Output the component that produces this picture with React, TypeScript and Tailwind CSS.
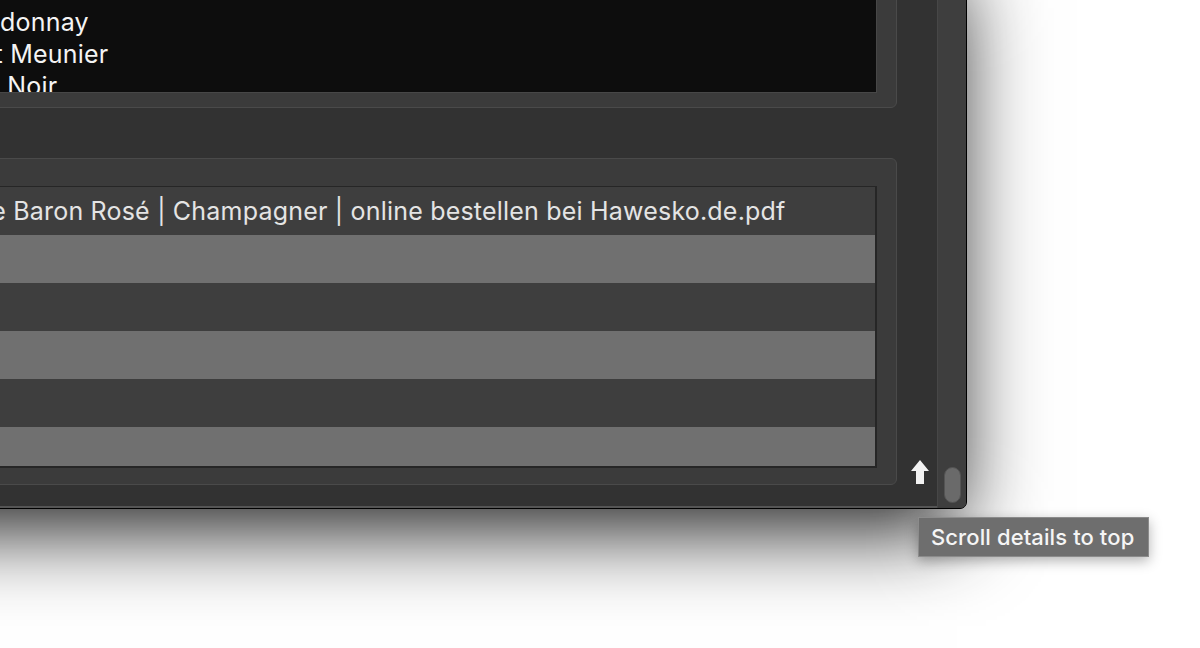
export default function App() {
  return (
    <div className="relative w-[1200px] h-[648px] overflow-hidden bg-white font-['Inter',sans-serif]">
      {/* window, its left and top edges are off the page */}
      <div className="relative ml-[-120px] mt-[-60px] flex w-[1087px] h-[569px] overflow-hidden rounded-br-[7px] border border-black bg-[#323232] shadow-[inset_-1px_-2px_0_#555,0_30px_80px_-10px_rgba(0,0,0,0.9)]">
        <main className="relative flex flex-1 flex-col pl-[9px] pr-[40px] pt-[1px]">
          {/* details text */}
          <section className="flex h-[166px] rounded-[6px] border border-[#4a4a4a] bg-[#3b3b3b] pl-[19px] pr-[19px] pt-[14px] pb-[14px]">
            <div className="flex-1 overflow-hidden border border-[#474747] bg-[#0d0d0d] pt-[48px] text-[25px] leading-[32px] tracking-[0.2px] text-[#f4f4f4]">
              <div className="flex whitespace-nowrap">
                <span className="w-[89px] shrink-0 text-right">Char</span>
                <span>donnay</span>
              </div>
              <div className="flex whitespace-nowrap">
                <span className="w-[92px] shrink-0 text-right">Pinot</span>
                <span>&nbsp;Meunier</span>
              </div>
              <div className="flex whitespace-nowrap">
                <span className="w-[89px] shrink-0 text-right">Pinot</span>
                <span>&nbsp;Noir</span>
              </div>
            </div>
          </section>

          {/* attachments list */}
          <section className="mt-[50px] flex h-[327px] rounded-[6px] border border-[#4a4a4a] bg-[#3b3b3b] pl-[19px] pr-[19px] pt-[27px] pb-[16px]">
            <div className="flex flex-1 flex-col overflow-hidden border-t border-r-2 border-b-2 border-[#262626] text-[25px] tracking-[0.2px] text-[#e4e4e4]">
              <div className="flex h-[48px] shrink-0 items-center bg-[#3e3e3e] pt-[1px] whitespace-nowrap">
                <span className="w-[96px] shrink-0 text-right">e</span>
                <span>&nbsp;Baron Rosé | Champagner | online bestellen bei Hawesko.de.pdf</span>
              </div>
              <div className="h-[48px] shrink-0 bg-[#707070]" />
              <div className="h-[48px] shrink-0 bg-[#3e3e3e]" />
              <div className="h-[48px] shrink-0 bg-[#707070]" />
              <div className="h-[48px] shrink-0 bg-[#3e3e3e]" />
              <div className="h-[48px] shrink-0 bg-[#707070]" />
            </div>
          </section>

          {/* scroll to top button */}
          <button className="absolute right-[8px] bottom-[24px] flex">
            <svg width="18" height="24" viewBox="0 0 18 24">
              <path d="M9 0 L18 11 H13 V24 H5 V11 H0 Z" fill="#f2f2f2" />
            </svg>
          </button>
        </main>

        {/* scrollbar */}
        <aside className="flex w-[29px] flex-col items-center justify-end border-l border-[#474747] bg-[#3e3e3e] pb-[5px]">
          <div className="h-[36px] w-[17px] rounded-full border border-[#545454] bg-[#6a6a6a]" />
        </aside>
      </div>

      {/* tooltip */}
      <div className="absolute left-[918px] top-[517px] flex h-[40px] w-[231px] items-center border border-[#8b8b8b] bg-[#6e6e6e] pl-[12px] text-[22px] font-medium tracking-[0.1px] text-[#f5f5f5] shadow-[0_4px_12px_rgba(0,0,0,0.3)]">
        Scroll details to top
      </div>
    </div>
  );
}
